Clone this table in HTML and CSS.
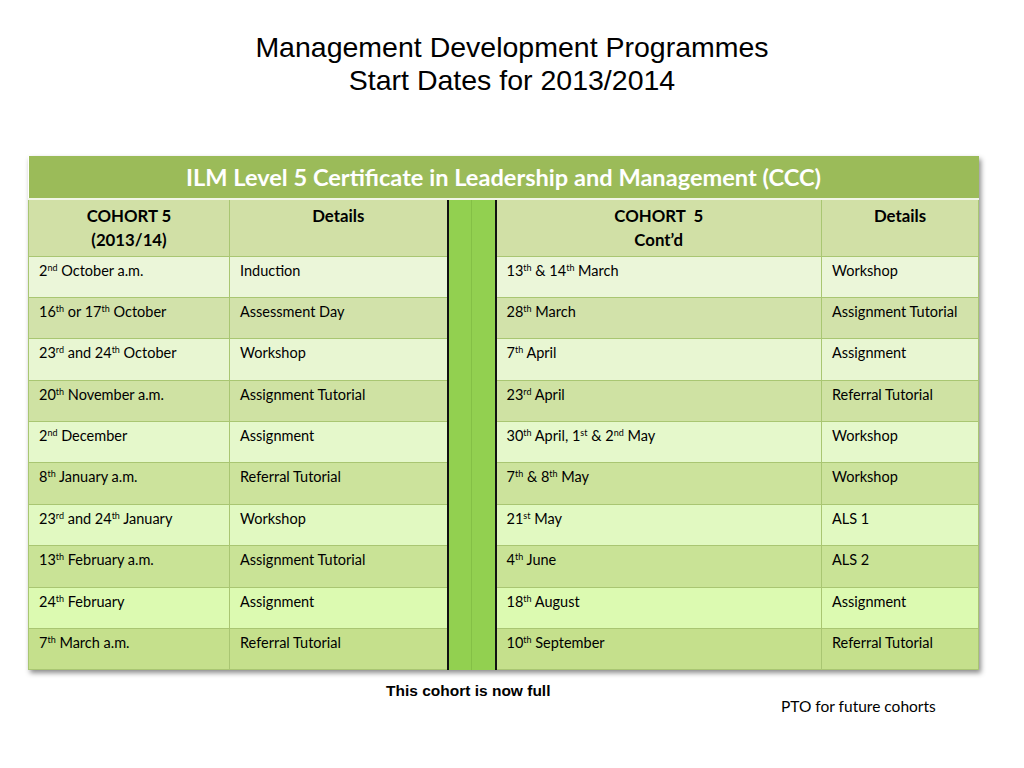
FILE: index.html
```html
<!DOCTYPE html>
<html>
<head>
<meta charset="utf-8">
<link rel="stylesheet" href="styles.css">
</head>
<body>
<header class="heading">
  <div>Management Development Programmes</div>
  <div>Start Dates for 2013/2014</div>
</header>
<table class="sched">
  <colgroup>
    <col class="c1"><col class="c2"><col class="c3"><col class="c4"><col class="c5"><col class="c6">
  </colgroup>
  <tr class="title"><td colspan="6">ILM Level 5 Certificate in Leadership and Management (CCC)</td></tr>
  <tr class="head">
    <td>COHORT 5<br>(2013/14)</td>
    <td>Details</td>
    <td class="sep sepl" rowspan="11"></td>
    <td class="sep sepr" rowspan="11"></td>
    <td>COHORT&nbsp; 5<br>Cont’d</td>
    <td>Details</td>
  </tr>
  <tr class="r1"><td>2<sup>nd</sup> October a.m.</td><td>Induction</td><td>13<sup>th</sup> &amp; 14<sup>th</sup> March</td><td>Workshop</td></tr>
  <tr class="r2"><td>16<sup>th</sup> or 17<sup>th</sup> October</td><td>Assessment Day</td><td>28<sup>th</sup> March</td><td>Assignment Tutorial</td></tr>
  <tr class="r3"><td>23<sup>rd</sup> and 24<sup>th</sup> October</td><td>Workshop</td><td>7<sup>th</sup> April</td><td>Assignment</td></tr>
  <tr class="r4"><td>20<sup>th</sup> November a.m.</td><td>Assignment Tutorial</td><td>23<sup>rd</sup> April</td><td>Referral Tutorial</td></tr>
  <tr class="r5"><td>2<sup>nd</sup> December</td><td>Assignment</td><td>30<sup>th</sup> April, 1<sup>st</sup> &amp; 2<sup>nd</sup> May</td><td>Workshop</td></tr>
  <tr class="r6"><td>8<sup>th</sup> January a.m.</td><td>Referral Tutorial</td><td>7<sup>th</sup> &amp; 8<sup>th</sup> May</td><td>Workshop</td></tr>
  <tr class="r7"><td>23<sup>rd</sup> and 24<sup>th</sup> January</td><td>Workshop</td><td>21<sup>st</sup> May</td><td>ALS 1</td></tr>
  <tr class="r8"><td>13<sup>th</sup> February a.m.</td><td>Assignment Tutorial</td><td>4<sup>th</sup> June</td><td>ALS 2</td></tr>
  <tr class="r9"><td>24<sup>th</sup> February</td><td>Assignment</td><td>18<sup>th</sup> August</td><td>Assignment</td></tr>
  <tr class="r10"><td>7<sup>th</sup> March a.m.</td><td>Referral Tutorial</td><td>10<sup>th</sup> September</td><td>Referral Tutorial</td></tr>
</table>
<div class="notes">
  <div class="full">This cohort is now full</div>
  <div class="pto">PTO for future cohorts</div>
</div>
</body>
</html>
```
FILE: styles.css
```css
html, body { margin: 0; padding: 0; background: #fff; }
body { width: 1024px; height: 768px; overflow: hidden; font-family: "Lato", "Open Sans", sans-serif; color: #000; }

.heading {
  font-family: "Liberation Sans", Arial, sans-serif;
  font-size: 28.5px;
  line-height: 33px;
  text-align: center;
  padding-top: 31px;
  height: 156px;
  box-sizing: border-box;
}

.sched {
  margin-left: 28px;
  width: 950px;
  border-collapse: collapse;
  table-layout: fixed;
  box-shadow: 2px 3px 5px rgba(0,0,0,0.45);
}
.c1 { width: 201px; }
.c2 { width: 218px; }
.c3 { width: 24px; }
.c4 { width: 24px; }
.c5 { width: 326px; }
.c6 { width: 157px; }

.sched td {
  padding: 0;
  vertical-align: top;
  border: 1px solid #a9c672;
  font-size: 14.5px;
  line-height: 17px;
}

.title td {
  height: 42px;
  box-sizing: border-box;
  background: #9bbb59;
  color: #fff;
  font-weight: 700;
  font-size: 23.6px;
  line-height: 42px;
  text-align: center;
  vertical-align: middle;
  border: none;
  border-bottom: 2px solid #f1f6e6;
}

.head td {
  height: 57px;
  box-sizing: border-box;
  background: #d1e0a6;
  font-weight: 700;
  font-size: 16.8px;
  line-height: 24px;
  text-align: center;
  padding-top: 4px;
}

.sched td.sep {
  background: #92d050;
  border-top: 1px solid #8cc64c;
  border-bottom: none;
  padding: 0;
}
.sched td.sepl { border-left: 2px solid #111; border-right: 1px solid #84c046; }
.sched td.sepr { border-right: 2px solid #111; border-left: 1px solid #84c046; }

tr[class^="r"] td {
  height: 41.4px;
  box-sizing: border-box;
  padding: 5px 10px 0 10px;
}

.r1 td { background: #ebf6d9; }
.r2 td { background: #d2e2aa; }
.r3 td { background: #e8f6d2; }
.r4 td { background: #cfe2a3; }
.r5 td { background: #e5f8cb; }
.r6 td { background: #cce39c; }
.r7 td { background: #e1f9c1; }
.r8 td { background: #c9e396; }
.r9 td { background: #dcfab1; }
.r10 td { background: #c5e08c; }

sup {
  font-size: 9px;
  line-height: 0;
  vertical-align: 5px;
}

.notes {
  height: 60px;
}
.full {
  font-family: "Liberation Sans", Arial, sans-serif;
  font-weight: 700;
  font-size: 15.5px;
  margin-left: 386px;
  padding-top: 12px;
  line-height: 18px;
}
.pto {
  font-size: 15.5px;
  margin-left: 781px;
  line-height: 18px;
  margin-top: -3px;
}
```
